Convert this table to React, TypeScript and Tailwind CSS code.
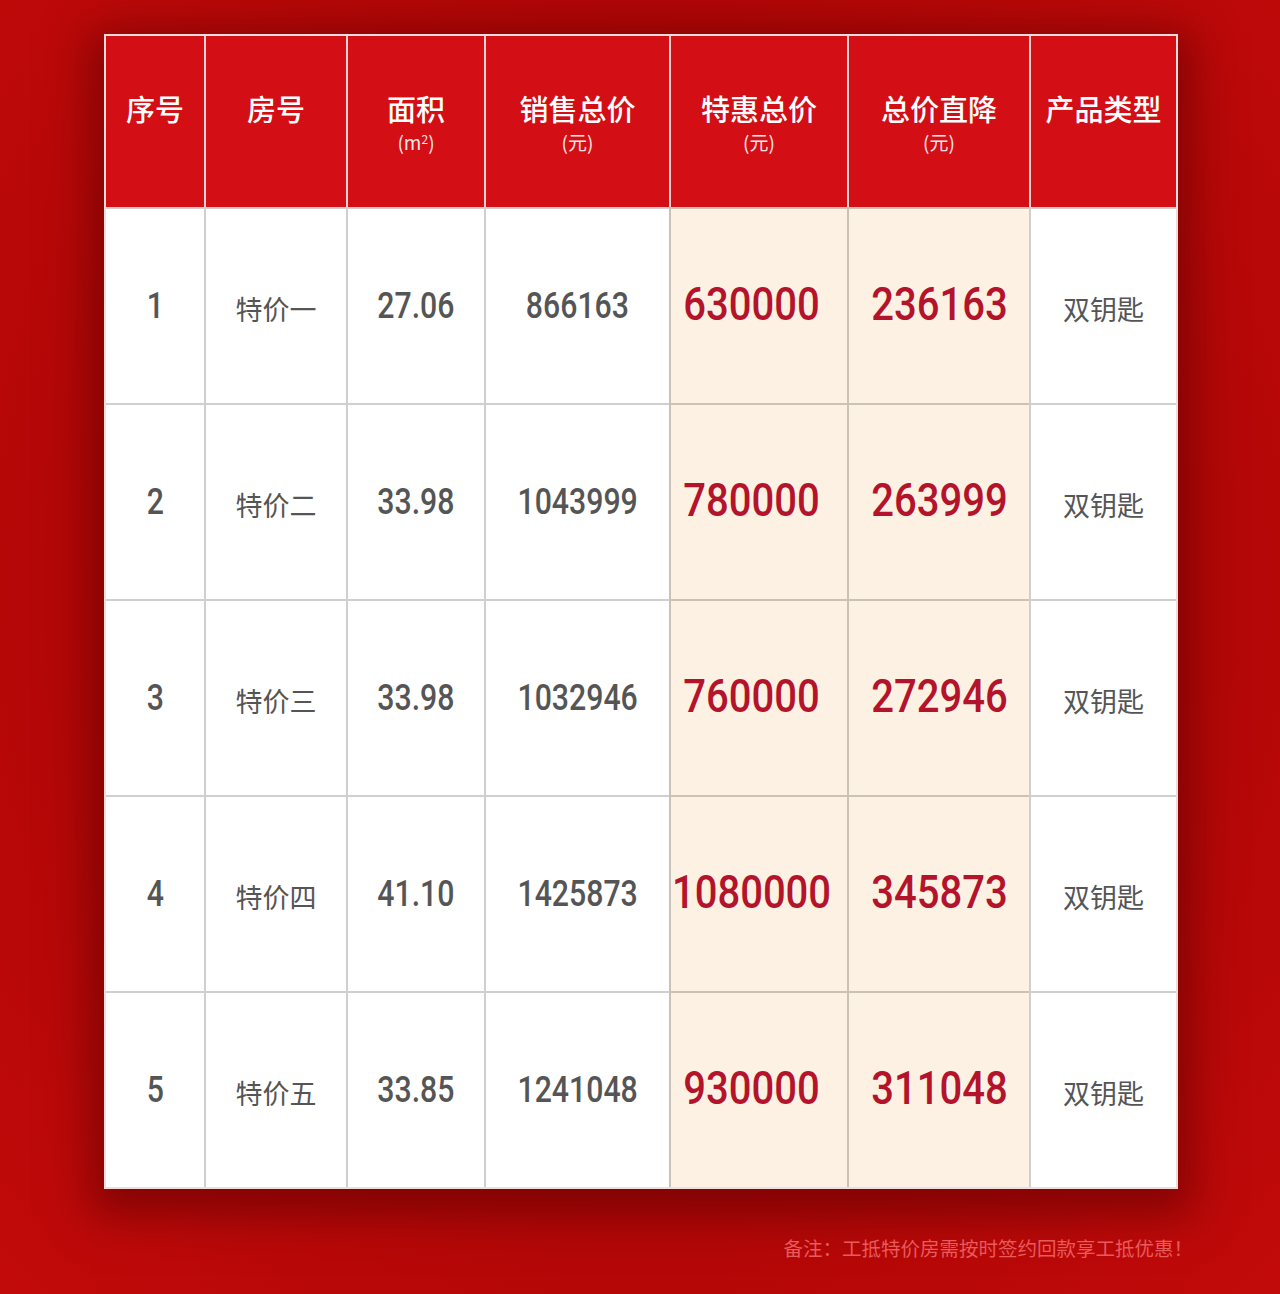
import React from 'react';

interface Row {
    id: string;
    room: string;
    area: string;
    total: string;
    special: string;
    drop: string;
    kind: string;
}

const rows: Row[] = [
    { id: '1', room: '特价一', area: '27.06', total: '866163', special: '630000', drop: '236163', kind: '双钥匙' },
    { id: '2', room: '特价二', area: '33.98', total: '1043999', special: '780000', drop: '263999', kind: '双钥匙' },
    { id: '3', room: '特价三', area: '33.98', total: '1032946', special: '760000', drop: '272946', kind: '双钥匙' },
    { id: '4', room: '特价四', area: '41.10', total: '1425873', special: '1080000', drop: '345873', kind: '双钥匙' },
    { id: '5', room: '特价五', area: '33.85', total: '1241048', special: '930000', drop: '311048', kind: '双钥匙' },
];

const cjk = { fontFamily: '"Noto Sans CJK SC", "Noto Sans", sans-serif' };
const num = { fontFamily: 'Roboto, "Noto Sans", sans-serif' };

const headers: { title: string; sub?: React.ReactNode }[] = [
    { title: '序号' },
    { title: '房号' },
    { title: '面积', sub: <>(m<span className="text-[12px] relative -top-[6px]">2</span>)</> },
    { title: '销售总价', sub: '(元)' },
    { title: '特惠总价', sub: '(元)' },
    { title: '总价直降', sub: '(元)' },
    { title: '产品类型' },
];

const GrayNum: React.FC<{ v: string }> = ({ v }) => (
    <span style={num} className="inline-block scale-x-[0.84] text-[36px] font-medium leading-none text-[#555555]">{v}</span>
);

const RedNum: React.FC<{ v: string }> = ({ v }) => (
    <span style={num} className="inline-block scale-x-[0.87] text-[46px] font-medium leading-none text-[#b3142b]">{v}</span>
);

const App: React.FC = () => {
    return (
        <div className="w-[1280px] h-[1294px] overflow-hidden bg-[radial-gradient(ellipse_at_50%_45%,#a00404_0%,#b00606_55%,#c20a0a_100%)]">
            <div className="ml-[104px] mt-[34px] w-[1074px] border-2 border-[#f1dcdc] bg-white shadow-[0_12px_40px_14px_rgba(90,0,0,0.55)]">
                <div className="grid grid-cols-[98px_142px_138px_185px_178px_182px_147px]">
                    {headers.map((h, i) => (
                        <div
                            key={h.title}
                            style={cjk}
                            className={`h-[171px] bg-[#d30e15] flex flex-col items-center pt-[52px] text-white ${i > 0 ? 'border-l-2 border-[#f0d2d2]' : ''}`}
                        >
                            <div className="text-[29px] font-medium leading-[40px]">{h.title}</div>
                            {h.sub && <div className="text-[19px] leading-[24px] mt-[2px] text-[#fbe6e6]">{h.sub}</div>}
                        </div>
                    ))}
                    {rows.map(r => (
                        <React.Fragment key={r.id}>
                            <div className="h-[196px] border-t-2 border-[#cfcfcf] flex items-center justify-center">
                                <GrayNum v={r.id} />
                            </div>
                            <div className="h-[196px] border-t-2 border-l-2 border-[#cfcfcf] flex items-center justify-center pt-[6px]">
                                <span style={cjk} className="text-[27px] text-[#555555]">{r.room}</span>
                            </div>
                            <div className="h-[196px] border-t-2 border-l-2 border-[#cfcfcf] flex items-center justify-center">
                                <GrayNum v={r.area} />
                            </div>
                            <div className="h-[196px] border-t-2 border-l-2 border-[#cfcfcf] flex items-center justify-center">
                                <GrayNum v={r.total} />
                            </div>
                            <div className="h-[196px] border-t-2 border-l-2 border-[#cac2b6] bg-[#fcf1e3] flex items-center justify-center pb-[4px] pr-[16px]">
                                <RedNum v={r.special} />
                            </div>
                            <div className="h-[196px] border-t-2 border-l-2 border-[#cac2b6] bg-[#fcf1e3] flex items-center justify-center pb-[4px]">
                                <RedNum v={r.drop} />
                            </div>
                            <div className="h-[196px] border-t-2 border-l-2 border-[#cfcfcf] flex items-center justify-center pt-[6px]">
                                <span style={cjk} className="text-[27px] text-[#555555]">{r.kind}</span>
                            </div>
                        </React.Fragment>
                    ))}
                </div>
            </div>
            <div className="w-[1193px] mt-[44px] text-right">
                <span style={cjk} className="text-[19.5px] text-[#e85a5c]">备注：工抵特价房需按时签约回款享工抵优惠！</span>
            </div>
        </div>
    );
};

export default App;
